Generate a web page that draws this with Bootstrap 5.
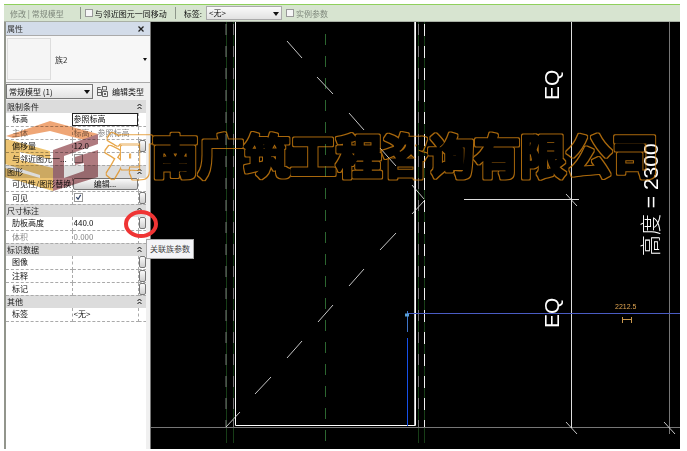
<!DOCTYPE html>
<html lang="zh-CN">
<head>
<meta charset="utf-8">
<meta name="viewport" content="width=device-width, initial-scale=1">
<title>属性</title>
<link href="https://cdn.jsdelivr.net/npm/bootstrap@5.3.0/dist/css/bootstrap.min.css" rel="stylesheet">
<style>
body{font:8px/13px "Noto Sans CJK SC",sans-serif;color:#111;background:#fff;padding:4px 7px 2px 4px}
.optbar{height:18px;background:#d7e4d0;border-top:1px solid #8fd05c;border-bottom:1px solid #a9b0a5;padding-left:6px}
.optbar .sep{width:1px;height:12px;background:#8d968a}
.optbar label{gap:2px}
.faint{color:#7f887c}
.optbar select{width:76px;height:14px}
select.ctl{font:inherit;line-height:12px;color:#111;border:1px solid #aaa;padding:0 10px 0 2px;appearance:none;background:linear-gradient(#fafafa,#e2e2e2)}
.pick{position:relative}
.pick::after,.arrow{content:"";border:3px solid transparent;border-top:4px solid #111;border-bottom:0}
.pick::after{position:absolute;right:3px;top:6px;pointer-events:none}
.chooser .arrow{border-width:3px 2px 0}
input[type=checkbox].tick{appearance:none;width:8px;height:8px;margin:0;border:1px solid #999;background:#f6f6f6;display:block;flex:none}
.sheet input[type=checkbox].tick{width:9px;height:9px}
input[type=checkbox].tick:checked{background:#fff url("data:image/svg+xml,%3Csvg xmlns='http://www.w3.org/2000/svg' viewBox='0 0 8 8'%3E%3Cpath d='M1.500 3.500l2 2.500 3-5' fill='none' stroke='%23334466' stroke-width='1.400'/%3E%3C/svg%3E")}
.props{width:147px;flex:none;border-left:2px solid #92958c;border-right:1px solid #777;background:#f0f0f0}
.titlebar{height:13px;flex:none;background:#d3dce9;padding:0 6px 0 1px;color:#333}
.titlebar button,.plain{border:0;background:none;padding:0;font:inherit;color:#111}
.chooser{height:48px;flex:none;background:#f7f7f7;border:1px solid #aaa;border-width:1px 0;padding:2px 3px 2px 1px;font:inherit;width:100%;color:#333;text-align:left}
.chooser .thumb{width:44px;height:42px;background:#f5f5f5;border:1px solid #ddd}
.filter{height:17px;flex:none}
.filter select{width:87px;height:15px;border-color:#777}
.sheet{background:#fff;margin-right:4px}
.sheet table{table-layout:fixed;width:100%;border-collapse:collapse;line-height:12px}
.sheet tr{height:13px}
.sheet td,.sheet tbody th{padding:0 1px;font-weight:400;border:1px dashed #aaa;border-left:0;border-top:0;height:13px;white-space:nowrap}
.sheet tbody th[scope=row]{padding-left:6px}
.sheet tbody th[scope=rowgroup]{background:#dcdcdc;border:0;padding-right:4px;color:#222}
.sheet .dim,.sheet .dim th{color:#858585}
.sheet td:last-child{padding:0;border-right:0}
.sheet td input[type=text]{display:block;width:100%;height:12px;border:0;padding:0;background:none;font:inherit;color:inherit}
.sheet td.editing{outline:1px solid #222;outline-offset:-1px}
.edit,.assoc{display:block;width:100%;height:12px;line-height:10px;border:1px solid #777;border-radius:2px;background:linear-gradient(#fafafa,#cfcfcf);padding:0;font-size:8px;color:#111}
.assoc{width:7px}
.stage{background:#000;min-width:0}
.stage svg,.over{display:block;width:100%;height:100%}
.over{left:0;top:0;pointer-events:none}
.eq{font:21px "Liberation Sans","Noto Sans CJK SC",sans-serif;fill:#fff}
.height-dim{font-weight:300}
.temp{font:7px "Liberation Sans",sans-serif;fill:#e0a552}
.brand{opacity:.7;mix-blend-mode:multiply}
.company{font:700 46px "Noto Sans CJK SC",sans-serif;fill:#e08a10;stroke:#e08a10;stroke-width:3;stroke-linejoin:round;opacity:.75}
.tip{left:142px;top:235px;padding:2px 3px;background:#f4f4f7;border:1px solid #aaa;color:#444;line-height:14px;white-space:nowrap}
</style>
<script src="https://cdn.jsdelivr.net/npm/bootstrap@5.3.0/dist/js/bootstrap.bundle.min.js"></script>
</head>
<body class="vh-100 overflow-hidden">
<div class="position-relative d-flex flex-column h-100">
  <header class="optbar d-flex align-items-center">
    <span class="faint">修改 | 常规模型</span>
    <span class="sep ms-3 me-1"></span>
    <label class="d-flex align-items-center"><input type="checkbox" class="tick">与邻近图元一同移动</label>
    <span class="sep ms-2 me-2"></span>
    <label for="tag" class="me-1">标签:</label>
    <span class="pick d-flex"><select id="tag" class="ctl"><option>&lt;无&gt;</option></select></span>
    <label class="d-flex align-items-center ms-1 faint"><input type="checkbox" class="tick" disabled>实例参数</label>
  </header>
  <div class="d-flex flex-grow-1" style="min-height:0">
    <aside class="props d-flex flex-column">
      <div class="titlebar d-flex justify-content-between align-items-center"><span>属性</span>
        <button aria-label="关闭"><svg width="6" height="6" viewBox="0 0 6 6" class="d-block"><path d="M.5.5l5 5m0-5l-5 5" stroke="#222" stroke-width="1.300"/></svg></button></div>
      <button class="chooser d-flex align-items-center gap-1"><span class="thumb"></span><span class="flex-grow-1">族2</span><span class="arrow"></span></button>
      <div class="filter d-flex align-items-center gap-1">
        <span class="pick d-flex"><select class="ctl" aria-label="类别"><option>常规模型 (1)</option></select></span>
        <button class="plain d-flex align-items-center gap-1"><svg width="11" height="11" viewBox="0 0 11 11" fill="none" stroke="#444"><path d="M.5 3.500V1.500h3M.5 3.500h4v6h-4zM.5 6.500h4M5.500.5h4v3.500h-4zM5.500 5.500h5v5h-5zM7 7l2 2m0-2l-2 2" stroke-width=".8"/></svg>编辑类型</button>
      </div>
      <div class="sheet flex-grow-1">
        <table>
          <colgroup><col style="width:66px"><col><col style="width:8px"></colgroup>
          <tbody>
            <tr><th scope="rowgroup" colspan="3"><div class="d-flex justify-content-between align-items-center">限制条件<svg width="5" height="7" viewBox="0 0 5 7"><path d="M.5 3l2-2 2 2m-4 3l2-2 2 2" fill="none" stroke="#111"/></svg></div></th></tr>
            <tr><th scope="row">标高</th><td class="editing"><input type="text" aria-label="标高" value="参照标高"></td><td></td></tr>
            <tr class="dim"><th scope="row">主体</th><td>标高：参照标高</td><td></td></tr>
            <tr><th scope="row">偏移量</th><td><input type="text" aria-label="偏移量" value="12.0"></td><td><button class="assoc" aria-label="关联偏移量"></button></td></tr>
            <tr><th scope="row">与邻近图元一...</th><td><input type="checkbox" class="tick" aria-label="与邻近图元一同移动"></td><td></td></tr>
          </tbody>
          <tbody>
            <tr><th scope="rowgroup" colspan="3"><div class="d-flex justify-content-between align-items-center">图形<svg width="5" height="7" viewBox="0 0 5 7"><path d="M.5 3l2-2 2 2m-4 3l2-2 2 2" fill="none" stroke="#111"/></svg></div></th></tr>
            <tr><th scope="row">可见性/图形替换</th><td class="p-0"><button class="edit">编辑...</button></td><td></td></tr>
            <tr><th scope="row">可见</th><td><input type="checkbox" class="tick" checked aria-label="可见"></td><td><button class="assoc" aria-label="关联可见"></button></td></tr>
          </tbody>
          <tbody>
            <tr><th scope="rowgroup" colspan="3"><div class="d-flex justify-content-between align-items-center">尺寸标注<svg width="5" height="7" viewBox="0 0 5 7"><path d="M.5 3l2-2 2 2m-4 3l2-2 2 2" fill="none" stroke="#111"/></svg></div></th></tr>
            <tr><th scope="row">肋板高度</th><td><input type="text" aria-label="肋板高度" value="440.0"></td><td><button class="assoc" aria-label="关联族参数"></button></td></tr>
            <tr class="dim"><th scope="row">体积</th><td>0.000</td><td></td></tr>
          </tbody>
          <tbody>
            <tr><th scope="rowgroup" colspan="3"><div class="d-flex justify-content-between align-items-center">标识数据<svg width="5" height="7" viewBox="0 0 5 7"><path d="M.5 3l2-2 2 2m-4 3l2-2 2 2" fill="none" stroke="#111"/></svg></div></th></tr>
            <tr><th scope="row">图像</th><td><input type="text" aria-label="图像"></td><td><button class="assoc" aria-label="关联图像"></button></td></tr>
            <tr><th scope="row">注释</th><td><input type="text" aria-label="注释"></td><td><button class="assoc" aria-label="关联注释"></button></td></tr>
            <tr><th scope="row">标记</th><td><input type="text" aria-label="标记"></td><td><button class="assoc" aria-label="关联标记"></button></td></tr>
          </tbody>
          <tbody>
            <tr><th scope="rowgroup" colspan="3"><div class="d-flex justify-content-between align-items-center">其他<svg width="5" height="7" viewBox="0 0 5 7"><path d="M.5 3l2-2 2 2m-4 3l2-2 2 2" fill="none" stroke="#111"/></svg></div></th></tr>
            <tr><th scope="row">标签</th><td><input type="text" aria-label="标签" value="&lt;无&gt;"></td><td></td></tr>
          </tbody>
        </table>
      </div>
    </aside>
    <main class="stage flex-grow-1">
      <svg viewBox="151 22 529 427" preserveAspectRatio="xMinYMin meet" fill="none">
        <!-- reference planes -->
        <g stroke="#173d17"><path d="M226.500 22v421M233.500 22v421M418.500 22v421M424.500 22v421"/></g>
        <path d="M325.500 34v415" stroke="#2c6630" stroke-dasharray="11 11"/>
        <g stroke-dasharray="11 11"><path d="M226 24v403M233.500 24v403M418.500 24v403" stroke="#777"/><path d="M424.500 24v403" stroke="#eee" stroke-dasharray="12 10"/></g>
        <path d="M151 427.500h529M669.500 22v412" stroke="#777"/>
        <path d="M235.500 22v403.500h180V22" stroke="#fff"/>
        <path d="M415 22v403" stroke="#fff" stroke-width="1.500"/>
        <!-- opening symbol -->
        <path d="M287 41l15 17M317 77l16 17M349 113l15 17M380 148l16 18M412 185l12 14M424 201l-12 13M396 233l-16 17M364 269l-15 17M333 305l-15 17M302 341l-15 17M271 377l-16 17M240 412l-14 15" stroke="#ddd" stroke-width=".9"/>
        <!-- dimensions -->
        <path d="M571.500 22v406M464 199.500h115" stroke="#ddd"/>
        <path d="M566 194l11 12M566 422l11 12M664 422l11 12" stroke="#ddd" stroke-width=".9"/>
        <path d="M407 313.500h273" stroke="#4a5cc4"/><path d="M407.500 311v21" stroke="#3e74c8"/><path d="M407.500 338v88" stroke="#1650e8"/><path d="M405 315h4" stroke="#58a0d8" stroke-width="3"/>
        <text class="eq" transform="translate(559 100) rotate(-90)">EQ</text>
        <text class="eq" transform="translate(559 328) rotate(-90)">EQ</text>
        <text class="eq height-dim" transform="translate(658 256) rotate(-90)">高度 = 2300</text>
        <text class="temp" x="615" y="309">2212.5</text>
        <path d="M622.500 317v6M631.500 317v6M622 319.500h9" stroke="#c9984e"/>
      </svg>
    </main>
  </div>
  <svg class="over position-absolute brand" viewBox="4 4 676 445" preserveAspectRatio="xMinYMin meet" aria-hidden="true">
    <path d="M6 136L50 121l48 13-10 7-38-10-37 7z" fill="#e8803c"/>
    <path d="M5 139l9 2 36 10v8l-30-7v8l33 8v23L5 177v-9l35 10v-3L5 164z" fill="#e5ab35"/>
    <path d="M53 150l45-16v10l-34 12v22l20-7v-8l-9 2v-8l23-7v27l-45 14z" fill="#8d4148"/>
  </svg>
  <svg class="over position-absolute" viewBox="4 4 676 445" preserveAspectRatio="xMinYMin meet">
    <defs><filter id="contour" x="-2%" y="-10%" width="104%" height="120%" color-interpolation-filters="sRGB"><feMorphology in="SourceGraphic" operator="dilate" radius="1" result="fat"/><feComposite in="fat" in2="SourceAlpha" operator="out"/></filter></defs>
    <text class="company" x="106" y="173" filter="url(#contour)">河南广筑工程咨询有限公司</text>
    <ellipse cx="141" cy="224" rx="15" ry="12" fill="none" stroke="#ef3434" stroke-width="4"/>
  </svg>
  <div class="tip position-absolute" role="tooltip">关联族参数</div>
</div>
</body>
</html>
